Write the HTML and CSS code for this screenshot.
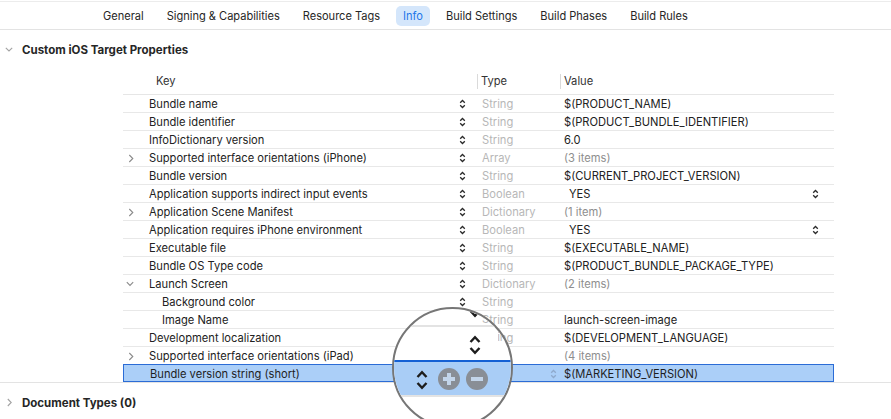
FILE: index.html
```html
<!DOCTYPE html>
<html lang="en">
<head>
<meta charset="utf-8">
<title>Info</title>
<link rel="stylesheet" href="styles.css">
</head>
<body>
<nav class="tabs">
  <span class="tab">General</span>
  <span class="tab">Signing &amp; Capabilities</span>
  <span class="tab">Resource Tags</span>
  <span class="tab active">Info</span>
  <span class="tab">Build Settings</span>
  <span class="tab">Build Phases</span>
  <span class="tab">Build Rules</span>
</nav>

<section class="section first">
  <div class="section-head">
    <svg class="chev-down" width="8" height="5" viewBox="0 0 8 5"><path d="M0.8 0.8 L4 4 L7.2 0.8" fill="none" stroke="#a3a3a3" stroke-width="1.1"/></svg>
    <span>Custom iOS Target Properties</span>
  </div>
  <div class="plist">
    <div class="plist-head">
      <div class="hc key">Key</div>
      <div class="hc type">Type</div>
      <div class="hc value">Value</div>
    </div>

    <div class="row">
      <div class="cell k"><span class="lead"></span><span class="label">Bundle name</span><svg class="stepper" viewBox="0 0 7 10"><path d="M1.2 3.8 L3.5 1.5 L5.8 3.8 M1.2 6.2 L3.5 8.5 L5.8 6.2"/></svg></div>
      <div class="cell t">String</div>
      <div class="cell v">$(PRODUCT_NAME)</div>
    </div>
    <div class="row">
      <div class="cell k"><span class="lead"></span><span class="label">Bundle identifier</span><svg class="stepper" viewBox="0 0 7 10"><path d="M1.2 3.8 L3.5 1.5 L5.8 3.8 M1.2 6.2 L3.5 8.5 L5.8 6.2"/></svg></div>
      <div class="cell t">String</div>
      <div class="cell v">$(PRODUCT_BUNDLE_IDENTIFIER)</div>
    </div>
    <div class="row">
      <div class="cell k"><span class="lead"></span><span class="label">InfoDictionary version</span><svg class="stepper" viewBox="0 0 7 10"><path d="M1.2 3.8 L3.5 1.5 L5.8 3.8 M1.2 6.2 L3.5 8.5 L5.8 6.2"/></svg></div>
      <div class="cell t">String</div>
      <div class="cell v">6.0</div>
    </div>
    <div class="row">
      <div class="cell k"><span class="lead"><svg class="disc" width="6" height="9" viewBox="0 0 6 9"><path d="M1.3 1 L4.8 4.5 L1.3 8"/></svg></span><span class="label">Supported interface orientations (iPhone)</span><svg class="stepper" viewBox="0 0 7 10"><path d="M1.2 3.8 L3.5 1.5 L5.8 3.8 M1.2 6.2 L3.5 8.5 L5.8 6.2"/></svg></div>
      <div class="cell t">Array</div>
      <div class="cell v muted">(3 items)</div>
    </div>
    <div class="row">
      <div class="cell k"><span class="lead"></span><span class="label">Bundle version</span><svg class="stepper" viewBox="0 0 7 10"><path d="M1.2 3.8 L3.5 1.5 L5.8 3.8 M1.2 6.2 L3.5 8.5 L5.8 6.2"/></svg></div>
      <div class="cell t">String</div>
      <div class="cell v">$(CURRENT_PROJECT_VERSION)</div>
    </div>
    <div class="row">
      <div class="cell k"><span class="lead"></span><span class="label">Application supports indirect input events</span><svg class="stepper" viewBox="0 0 7 10"><path d="M1.2 3.8 L3.5 1.5 L5.8 3.8 M1.2 6.2 L3.5 8.5 L5.8 6.2"/></svg></div>
      <div class="cell t">Boolean</div>
      <div class="cell v popup">YES<svg class="stepper pop" viewBox="0 0 7 10"><path d="M1.2 3.8 L3.5 1.5 L5.8 3.8 M1.2 6.2 L3.5 8.5 L5.8 6.2"/></svg></div>
    </div>
    <div class="row">
      <div class="cell k"><span class="lead"><svg class="disc" width="6" height="9" viewBox="0 0 6 9"><path d="M1.3 1 L4.8 4.5 L1.3 8"/></svg></span><span class="label">Application Scene Manifest</span><svg class="stepper" viewBox="0 0 7 10"><path d="M1.2 3.8 L3.5 1.5 L5.8 3.8 M1.2 6.2 L3.5 8.5 L5.8 6.2"/></svg></div>
      <div class="cell t">Dictionary</div>
      <div class="cell v muted">(1 item)</div>
    </div>
    <div class="row">
      <div class="cell k"><span class="lead"></span><span class="label">Application requires iPhone environment</span><svg class="stepper" viewBox="0 0 7 10"><path d="M1.2 3.8 L3.5 1.5 L5.8 3.8 M1.2 6.2 L3.5 8.5 L5.8 6.2"/></svg></div>
      <div class="cell t">Boolean</div>
      <div class="cell v popup">YES<svg class="stepper pop" viewBox="0 0 7 10"><path d="M1.2 3.8 L3.5 1.5 L5.8 3.8 M1.2 6.2 L3.5 8.5 L5.8 6.2"/></svg></div>
    </div>
    <div class="row">
      <div class="cell k"><span class="lead"></span><span class="label">Executable file</span><svg class="stepper" viewBox="0 0 7 10"><path d="M1.2 3.8 L3.5 1.5 L5.8 3.8 M1.2 6.2 L3.5 8.5 L5.8 6.2"/></svg></div>
      <div class="cell t">String</div>
      <div class="cell v">$(EXECUTABLE_NAME)</div>
    </div>
    <div class="row">
      <div class="cell k"><span class="lead"></span><span class="label">Bundle OS Type code</span><svg class="stepper" viewBox="0 0 7 10"><path d="M1.2 3.8 L3.5 1.5 L5.8 3.8 M1.2 6.2 L3.5 8.5 L5.8 6.2"/></svg></div>
      <div class="cell t">String</div>
      <div class="cell v">$(PRODUCT_BUNDLE_PACKAGE_TYPE)</div>
    </div>
    <div class="row">
      <div class="cell k"><span class="lead"><svg class="disc down" width="8" height="6" viewBox="0 0 8 6"><path d="M0.8 1.2 L4 4.4 L7.2 1.2"/></svg></span><span class="label">Launch Screen</span><svg class="stepper" viewBox="0 0 7 10"><path d="M1.2 3.8 L3.5 1.5 L5.8 3.8 M1.2 6.2 L3.5 8.5 L5.8 6.2"/></svg></div>
      <div class="cell t">Dictionary</div>
      <div class="cell v muted">(2 items)</div>
    </div>
    <div class="row">
      <div class="cell k nested"><span class="lead"></span><span class="label">Background color</span><svg class="stepper" viewBox="0 0 7 10"><path d="M1.2 3.8 L3.5 1.5 L5.8 3.8 M1.2 6.2 L3.5 8.5 L5.8 6.2"/></svg></div>
      <div class="cell t">String</div>
      <div class="cell v"></div>
    </div>
    <div class="row">
      <div class="cell k nested"><span class="lead"></span><span class="label">Image Name</span><svg class="stepper" viewBox="0 0 7 10"><path d="M1.2 3.8 L3.5 1.5 L5.8 3.8 M1.2 6.2 L3.5 8.5 L5.8 6.2"/></svg></div>
      <div class="cell t">String</div>
      <div class="cell v">launch-screen-image</div>
    </div>
    <div class="row">
      <div class="cell k"><span class="lead"></span><span class="label">Development localization</span><svg class="stepper" viewBox="0 0 7 10"><path d="M1.2 3.8 L3.5 1.5 L5.8 3.8 M1.2 6.2 L3.5 8.5 L5.8 6.2"/></svg></div>
      <div class="cell t">String</div>
      <div class="cell v">$(DEVELOPMENT_LANGUAGE)</div>
    </div>
    <div class="row">
      <div class="cell k"><span class="lead"><svg class="disc" width="6" height="9" viewBox="0 0 6 9"><path d="M1.3 1 L4.8 4.5 L1.3 8"/></svg></span><span class="label">Supported interface orientations (iPad)</span><svg class="stepper" viewBox="0 0 7 10"><path d="M1.2 3.8 L3.5 1.5 L5.8 3.8 M1.2 6.2 L3.5 8.5 L5.8 6.2"/></svg></div>
      <div class="cell t">Array</div>
      <div class="cell v muted">(4 items)</div>
    </div>
    <div class="row selected">
      <div class="cell k"><span class="lead"></span><span class="label">Bundle version string (short)</span></div>
      <div class="cell t"><svg class="stepper faint" viewBox="0 0 7 10"><path d="M1.2 3.8 L3.5 1.5 L5.8 3.8 M1.2 6.2 L3.5 8.5 L5.8 6.2"/></svg></div>
      <div class="cell v">$(MARKETING_VERSION)</div>
    </div>
  </div>
</section>

<section class="section">
  <div class="section-head">
    <svg class="chev-right" width="5" height="9" viewBox="0 0 5 9"><path d="M0.8 1 L4.2 4.5 L0.8 8" fill="none" stroke="#a3a3a3" stroke-width="1.1"/></svg>
    <span>Document Types (0)</span>
  </div>
</section>

<div class="magnifier" aria-hidden="true">
  <div class="mg-sep"></div>
  <svg class="mg-step mg-step-top" viewBox="0 0 14 22"><path d="M2.5 8 L7 3.2 L11.5 8 M2.5 14 L7 18.8 L11.5 14"/></svg>
  <span class="mg-text mg-t1">String</span>
  <span class="mg-text mg-t2">String</span>
  <svg class="mg-step mg-step-mid" viewBox="0 0 14 22"><path d="M2.5 8 L7 3.2 L11.5 8 M2.5 14 L7 18.8 L11.5 14"/></svg>
  <div class="mg-blue-line"></div>
  <div class="mg-blue"></div>
  <div class="mg-grey"></div>
  <svg class="mg-step mg-step-sel" viewBox="0 0 14 22"><path d="M2.5 8 L7 3.2 L11.5 8 M2.5 14 L7 18.8 L11.5 14"/></svg>
  <span class="mg-btn mg-plus"></span>
  <span class="mg-btn mg-minus"></span>
</div>
</body>
</html>
```

FILE: styles.css
```css
* { box-sizing: content-box; }

body {
  margin: 0;
  background: #ffffff;
  font-family: Inter, "Noto Sans", sans-serif;
  font-size: 11.15px;
  color: #222222;
  overflow: hidden;
}

/* ---------- tab bar ---------- */
.tabs {
  display: flex;
  align-items: center;
  gap: 9px;
  height: 27px;
  margin-top: 1px;
  padding-left: 96px;
  border-top: 1px solid #ececec;
  border-bottom: 1px solid #e3e3e3;
  font-size: 11.05px;
}

.tab {
  padding: 0 7px;
  height: 20px;
  line-height: 20px;
  border-radius: 5px;
  color: #262626;
  white-space: nowrap;
}

.tab.active {
  background: #d4e6fb;
  color: #1f76ea;
}

/* ---------- sections ---------- */
.section.first {
  border-bottom: 1px solid #e3e3e3;
}

.section-head {
  display: flex;
  align-items: center;
  height: 38px;
  padding-top: 1px;
  box-sizing: border-box;
  font-size: 11.5px;
  font-weight: 700;
  color: #262626;
}

.chev-down {
  margin-left: 5px;
  margin-right: 9px;
  flex: none;
}

.chev-right {
  margin-left: 7px;
  margin-right: 10px;
  flex: none;
}

/* ---------- property list ---------- */
.plist {
  margin-left: 123px;
  width: 711px;
}

.plist-head,
.row {
  display: grid;
  grid-template-columns: 354px 83px 274px;
}

.plist-head {
  height: 26px;
  align-items: center;
  border-bottom: 1px solid #e6e6e6;
  color: #333333;
}

.hc {
  height: 15px;
  line-height: 15px;
}

.hc.key {
  padding-left: 33px;
}

.hc.type,
.hc.value {
  border-left: 1px solid #dadada;
  padding-left: 3px;
}

.row {
  height: 17px;
  line-height: 17px;
  border-bottom: 1px solid #e8e8e8;
}

.cell {
  display: flex;
  align-items: center;
  min-width: 0;
  padding-top: 1px;
  box-sizing: border-box;
  white-space: nowrap;
  overflow: hidden;
}

.lead {
  width: 26px;
  flex: none;
  display: flex;
  align-items: center;
}

.disc {
  margin-left: 5px;
  fill: none;
  stroke: #8a8a8a;
  stroke-width: 1.1;
}

.disc.down {
  margin-left: 3px;
}

.k.nested .label {
  padding-left: 13px;
}

.stepper {
  width: 7px;
  height: 10px;
  flex: none;
  margin-left: auto;
  margin-right: 11px;
  fill: none;
  stroke: #2a2a2a;
  stroke-width: 1.3;
}

.t {
  padding-left: 5px;
  color: #b7b7b7;
}

.v {
  padding-left: 4px;
}

.v.muted {
  color: #8e8e8e;
}

.v.popup {
  padding-left: 9px;
}

.stepper.pop {
  margin-right: 15px;
}

.row.selected {
  margin-top: -1px;
  height: 16px;
  line-height: 16px;
  border: 1px solid #2b6cd6;
  background: #abcff8;
  grid-template-columns: 353px 83px 273px;
  color: #1e1e1e;
}

.stepper.faint {
  margin-right: 3px;
  stroke: #8ea9cc;
}

/* ---------- magnifier overlay ---------- */
.magnifier {
  position: absolute;
  left: 392px;
  top: 307px;
  width: 117px;
  height: 117px;
  border: 2px solid #767676;
  border-radius: 50%;
  overflow: hidden;
  background: #ffffff;
}

.mg-sep {
  position: absolute;
  left: 0;
  right: 0;
  top: 16px;
  height: 2px;
  background: #e3e3e3;
}

.mg-step {
  position: absolute;
  width: 14px;
  height: 22px;
  fill: none;
  stroke: #1d1d1d;
  stroke-width: 2.4;
}

.mg-step-top {
  left: 74px;
  top: -12px;
}

.mg-step-mid {
  left: 74px;
  top: 25px;
}

.mg-step-sel {
  left: 21px;
  top: 60px;
}

.mg-text {
  position: absolute;
  left: 88px;
  height: 18px;
  line-height: 18px;
  color: #b7b7b7;
  white-space: nowrap;
}

.mg-t1 {
  top: 1px;
}

.mg-t2 {
  top: 19px;
  clip-path: inset(0 0 0 16px);
}

.mg-blue-line {
  position: absolute;
  left: 0;
  right: 0;
  top: 51px;
  height: 2px;
  background: #1460d4;
}

.mg-blue {
  position: absolute;
  left: 0;
  right: 0;
  top: 53px;
  height: 33px;
  background: #a9cdf6;
}

.mg-grey {
  position: absolute;
  left: 0;
  right: 0;
  top: 86px;
  height: 2px;
  background: #e3e3e3;
}

.mg-btn {
  position: absolute;
  top: 59px;
  width: 22px;
  height: 22px;
  border-radius: 50%;
  background: #898e96;
}

.mg-plus {
  left: 44px;
}

.mg-minus {
  left: 72px;
}

.mg-btn::before,
.mg-btn::after {
  content: "";
  position: absolute;
  left: 5px;
  top: 9px;
  width: 12px;
  height: 4px;
  background: #c3d5ea;
}

.mg-plus::after {
  left: 9px;
  top: 5px;
  width: 4px;
  height: 12px;
}

.mg-minus::after {
  display: none;
}
```
